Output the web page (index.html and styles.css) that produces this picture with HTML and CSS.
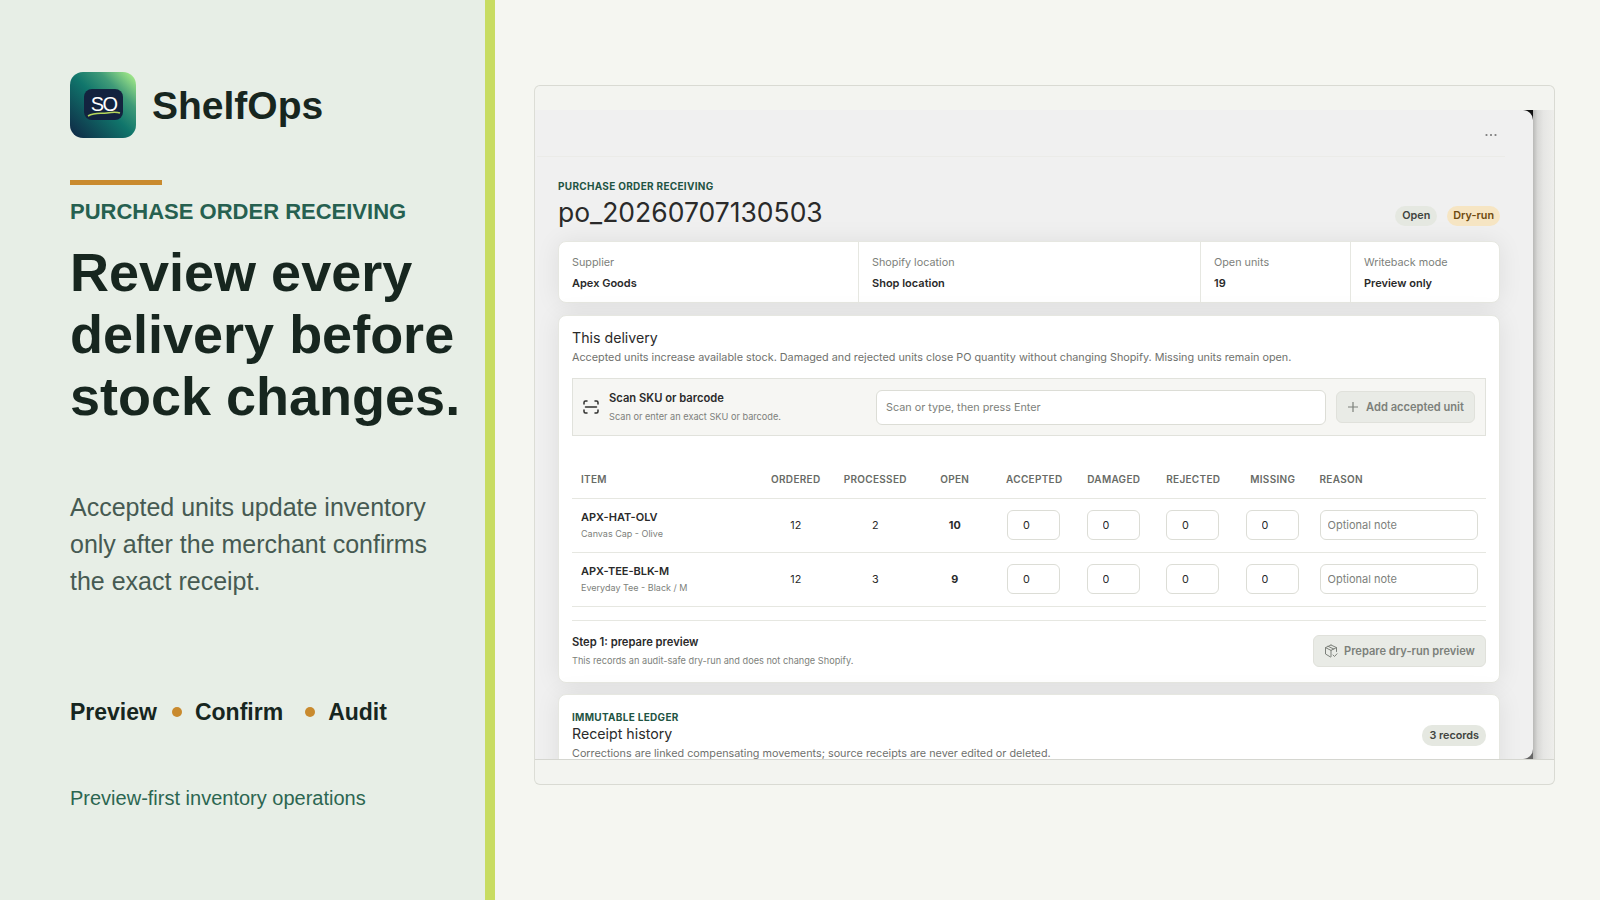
FILE: index.html
```html
<!DOCTYPE html>
<html lang="en">
<head>
    <meta charset="UTF-8">
    <meta name="viewport" content="width=device-width, initial-scale=1.0">
    <title>ShelfOps - Purchase order receiving</title>
    <link rel="stylesheet" href="styles.css">
</head>
<body>
    <aside class="intro">
        <div class="brand">
            <svg class="brand-logo" viewBox="0 0 66 66" width="66" height="66">
                <defs>
                    <linearGradient id="logo-bg" x1="0" y1="1" x2="1" y2="0">
                        <stop offset="0" stop-color="#0f2544"/>
                        <stop offset="0.5" stop-color="#10756b"/>
                        <stop offset="0.72" stop-color="#3f9a78"/>
                        <stop offset="1" stop-color="#b4f78c"/>
                    </linearGradient>
                </defs>
                <rect width="66" height="66" rx="13" fill="url(#logo-bg)"/>
                <rect x="14" y="17" width="39" height="31" rx="8" fill="#13233f"/>
                <text class="logo-text" x="33.5" y="38.5" text-anchor="middle">SO</text>
                <path d="M18 44 C25 40 31 42 37 41 C43 40 47 40 50 41" fill="none" stroke="#b5d65a" stroke-width="1.5"/>
            </svg>
            <span class="brand-name">ShelfOps</span>
        </div>
        <div class="intro-rule"></div>
        <p class="intro-eyebrow">PURCHASE ORDER RECEIVING</p>
        <h1>Review every delivery before stock changes.</h1>
        <p class="intro-text">Accepted units update inventory only after the merchant confirms the exact receipt.</p>
        <div class="steps">
            <span>Preview</span>
            <i class="dot"></i>
            <span>Confirm</span>
            <i class="dot dot-wide"></i>
            <span>Audit</span>
        </div>
        <p class="intro-foot">Preview-first inventory operations</p>
    </aside>

    <main class="stage">
        <div class="frame">
            <div class="view">
                <div class="screen">
                    <div class="topbar">
                        <svg class="more" viewBox="0 0 12 4" width="12" height="4"><circle cx="1.5" cy="2" r="1.1"/><circle cx="6" cy="2" r="1.1"/><circle cx="10.5" cy="2" r="1.1"/></svg>
                    </div>
                    <div class="content">
                        <div class="page-head">
                            <div>
                                <p class="eyebrow">PURCHASE ORDER RECEIVING</p>
                                <h2 class="po-id">po_20260707130503</h2>
                            </div>
                            <div class="badges">
                                <span class="badge">Open</span>
                                <span class="badge badge-warn">Dry-run</span>
                            </div>
                        </div>

                        <div class="card summary">
                            <div class="summary-cell"><span>Supplier</span><strong>Apex Goods</strong></div>
                            <div class="summary-cell"><span>Shopify location</span><strong>Shop location</strong></div>
                            <div class="summary-cell"><span>Open units</span><strong>19</strong></div>
                            <div class="summary-cell"><span>Writeback mode</span><strong>Preview only</strong></div>
                        </div>

                        <section class="card delivery">
                            <h3>This delivery</h3>
                            <p class="muted">Accepted units increase available stock. Damaged and rejected units close PO quantity without changing Shopify. Missing units remain open.</p>

                            <div class="scan">
                                <svg class="scan-icon" viewBox="0 0 16 14" width="16" height="14" fill="none" stroke="#30302e" stroke-width="1.5" stroke-linecap="round">
                                    <path d="M1 4 V2.5 A1.5 1.5 0 0 1 2.5 1 H4"/>
                                    <path d="M12 1 H13.5 A1.5 1.5 0 0 1 15 2.5 V4"/>
                                    <path d="M1 10 V11.5 A1.5 1.5 0 0 0 2.5 13 H4"/>
                                    <path d="M12 13 H13.5 A1.5 1.5 0 0 0 15 11.5 V10"/>
                                    <path d="M2.5 7 H13.5"/>
                                </svg>
                                <div class="scan-copy">
                                    <strong>Scan SKU or barcode</strong>
                                    <span>Scan or enter an exact SKU or barcode.</span>
                                </div>
                                <input class="scan-input" type="text" placeholder="Scan or type, then press Enter">
                                <button class="btn btn-add">
                                    <svg viewBox="0 0 12 12" width="12" height="12" fill="none" stroke="#7c807a" stroke-width="1.2"><path d="M6 1 V11 M1 6 H11"/></svg>
                                    Add accepted unit
                                </button>
                            </div>

                            <table class="lines">
                                <colgroup>
                                    <col class="col-item">
                                    <col class="col-num"><col class="col-num"><col class="col-num"><col class="col-num">
                                    <col class="col-num"><col class="col-num"><col class="col-num">
                                    <col class="col-reason">
                                </colgroup>
                                <thead>
                                    <tr>
                                        <th class="left">ITEM</th>
                                        <th>ORDERED</th>
                                        <th>PROCESSED</th>
                                        <th>OPEN</th>
                                        <th>ACCEPTED</th>
                                        <th>DAMAGED</th>
                                        <th>REJECTED</th>
                                        <th>MISSING</th>
                                        <th class="left">REASON</th>
                                    </tr>
                                </thead>
                                <tbody>
                                    <tr>
                                        <td class="left"><strong class="sku">APX-HAT-OLV</strong><span class="sku-name">Canvas Cap - Olive</span></td>
                                        <td>12</td>
                                        <td>2</td>
                                        <td><strong>10</strong></td>
                                        <td><input class="qty" type="text" value="0"></td>
                                        <td><input class="qty" type="text" value="0"></td>
                                        <td><input class="qty" type="text" value="0"></td>
                                        <td><input class="qty" type="text" value="0"></td>
                                        <td><input class="note" type="text" placeholder="Optional note"></td>
                                    </tr>
                                    <tr>
                                        <td class="left"><strong class="sku">APX-TEE-BLK-M</strong><span class="sku-name">Everyday Tee - Black / M</span></td>
                                        <td>12</td>
                                        <td>3</td>
                                        <td><strong>9</strong></td>
                                        <td><input class="qty" type="text" value="0"></td>
                                        <td><input class="qty" type="text" value="0"></td>
                                        <td><input class="qty" type="text" value="0"></td>
                                        <td><input class="qty" type="text" value="0"></td>
                                        <td><input class="note" type="text" placeholder="Optional note"></td>
                                    </tr>
                                </tbody>
                            </table>

                            <div class="step">
                                <div class="step-copy">
                                    <strong>Step 1: prepare preview</strong>
                                    <span>This records an audit-safe dry-run and does not change Shopify.</span>
                                </div>
                                <button class="btn btn-prepare">
                                    <svg viewBox="0 0 14 14" width="14" height="14" fill="none" stroke="#7c807a" stroke-width="1" stroke-linejoin="round" stroke-linecap="round">
                                        <path d="M7 1 L12.5 3.6 V7.5 M7 1 L1.5 3.6 V10 L6.5 13"/>
                                        <path d="M1.5 3.6 L7 6.4 L12.5 3.6 M7 6.4 V12.5 M4 2.3 L9.8 5"/>
                                        <path d="M9 11 L10.5 12.5 L13 9.8"/>
                                    </svg>
                                    Prepare dry-run preview
                                </button>
                            </div>
                        </section>

                        <section class="card ledger">
                            <div class="ledger-head">
                                <div>
                                    <p class="eyebrow">IMMUTABLE LEDGER</p>
                                    <h3>Receipt history</h3>
                                </div>
                                <span class="badge">3 records</span>
                            </div>
                            <p class="muted">Corrections are linked compensating movements; source receipts are never edited or deleted.</p>
                        </section>
                    </div>
                </div>
                <div class="shade"></div>
            </div>
        </div>
    </main>
</body>
</html>
```

FILE: styles.css
```css
* {
    box-sizing: border-box;
}
html, body {
    height: 100%;
}
body {
    margin: 0;
    display: flex;
    height: 900px;
    overflow: hidden;
    background-color: #f5f6f1;
    font-family: Inter, "Liberation Sans", sans-serif;
    color: #2a2a2a;
}
p, h1, h2, h3 {
    margin: 0;
}

/* left panel */
.intro {
    width: 495px;
    flex: none;
    padding: 72px 0 0 70px;
    background-color: #e7eee6;
    border-right: 10px solid #c8dc62;
    font-family: "Liberation Sans", Arial, sans-serif;
    color: #17261f;
}
.brand {
    display: flex;
    align-items: center;
    gap: 16px;
    height: 66px;
}
.brand-logo {
    flex: none;
}
.logo-text {
    font-family: "Liberation Sans", Arial, sans-serif;
    font-size: 20px;
    letter-spacing: -1.8px;
    fill: #fff;
}
.brand-name {
    padding-top: 2px;
    font-size: 39px;
    font-weight: 700;
}
.intro-rule {
    width: 92px;
    height: 5px;
    margin-top: 42px;
    background-color: #c98a2e;
}
.intro-eyebrow {
    margin-top: 13px;
    font-size: 22px;
    line-height: 28px;
    font-weight: 700;
    color: #266050;
}
h1 {
    margin-top: 15px;
    width: 400px;
    font-size: 54px;
    line-height: 62px;
    font-weight: 700;
}
.intro-text {
    margin-top: 62px;
    width: 370px;
    font-size: 25px;
    line-height: 37px;
    color: #465a52;
}
.steps {
    display: flex;
    align-items: center;
    margin-top: 98px;
    font-size: 23px;
    line-height: 28px;
    font-weight: 700;
}
.dot {
    width: 10px;
    height: 10px;
    margin: 0 13px 0 15px;
    border-radius: 50%;
    background-color: #c98a2e;
}
.dot-wide {
    margin: 0 13px 0 22px;
}
.intro-foot {
    margin-top: 59px;
    font-size: 20px;
    line-height: 26px;
    color: #2c6651;
}

/* screenshot frame */
.stage {
    flex: 1;
    padding: 85px 45px 0 39px;
}
.frame {
    height: 700px;
    padding: 24px 0 25px;
    background-color: #f3f4f0;
    border: 1px solid #d9dad3;
    border-left-color: #dcddd6;
    border-radius: 6px;
}
.view {
    position: relative;
    display: flex;
    height: 650px;
    border-bottom: 1px solid #d5d6d0;
}
/* dark corners of the captured window, behind the rounded screen */
.view::before,
.view::after {
    content: "";
    position: absolute;
    left: 988px;
    width: 10px;
    height: 10px;
}
.view::before {
    top: 0;
    background-color: #111;
}
.view::after {
    bottom: 0;
    background-color: #666;
}
.screen {
    position: relative;
    z-index: 1;
    width: 998px;
    flex: none;
    overflow: hidden;
    background-color: #f0f0f0;
    border-radius: 0 10px 10px 0;
}
.shade {
    flex: 1;
    background: linear-gradient(90deg, #b9b9b7 0%, #d8d8d6 22%, #e6e6e4 50%, #eeeeeb 100%);
}
.topbar {
    display: flex;
    justify-content: flex-end;
    align-items: center;
    height: 47px;
    margin: 0 28px 0 2px;
    padding: 3px 8px 0 0;
    border-bottom: 1px solid #ebebe8;
}
.more {
    fill: #7b7b7b;
}
.content {
    padding: 22px 33px 0 23px;
}
.eyebrow {
    font-size: 10px;
    line-height: 14px;
    font-weight: 700;
    letter-spacing: 0.3px;
    color: #1f5443;
}
.page-head {
    display: flex;
    justify-content: space-between;
    align-items: flex-end;
    margin-bottom: 13px;
}
.po-id {
    margin-top: 3px;
    font-size: 26.5px;
    line-height: 32px;
    font-weight: 400;
    color: #2a2a2a;
}
.badges {
    display: flex;
    gap: 10px;
    margin-bottom: 2px;
}
.badge {
    padding: 0 7px;
    height: 20px;
    line-height: 20px;
    border-radius: 10px;
    font-size: 10.8px;
    font-weight: 600;
    background-color: #e5e8e1;
    color: #40443f;
}
.badge-warn {
    padding: 0 6px;
    background-color: #f6e5c3;
    color: #6d4a10;
}
.card {
    background-color: #fff;
    border: 1px solid #e6e7e1;
    border-radius: 8px;
    box-shadow: 0 1px 24px rgba(0, 0, 0, 0.08);
}
.summary {
    display: grid;
    grid-template-columns: 299px 342px 150px 1fr;
    height: 62px;
}
.summary-cell {
    padding: 14px 13px 0;
    border-left: 1px solid #e6e7e1;
}
.summary-cell:first-child {
    border-left: none;
}
.summary-cell span {
    display: block;
    font-size: 10.8px;
    line-height: 14px;
    color: #7d7f7b;
}
.summary-cell strong {
    display: block;
    margin-top: 6px;
    font-size: 11px;
    line-height: 14px;
    font-weight: 600;
}
.delivery {
    height: 368px;
    margin-top: 12px;
    padding: 13px 13px 0;
}
h3 {
    font-size: 14.2px;
    line-height: 18px;
    font-weight: 400;
}
.muted {
    margin-top: 4px;
    font-size: 10.8px;
    line-height: 14px;
    color: #6f716d;
}

/* scan row */
.scan {
    display: flex;
    align-items: center;
    height: 58px;
    margin-top: 13px;
    padding: 0 10px;
    background-color: #f6f6f3;
    border: 1px solid #e1e2dc;
}
.scan-icon {
    flex: none;
}
.scan-copy {
    width: 267px;
    margin-left: 10px;
}
.scan-copy strong,
.step-copy strong {
    display: block;
    font-size: 11.2px;
    line-height: 14px;
    font-weight: 600;
}
.scan-copy span,
.step-copy span {
    display: block;
    margin-top: 5px;
    font-size: 9.2px;
    line-height: 13px;
    color: #7d7f7b;
}
input {
    font-family: Inter, "Liberation Sans", sans-serif;
    color: #2a2a2a;
    background-color: #fff;
    border: 1px solid #dcddd6;
    outline: none;
}
input::placeholder {
    color: #7d7f7b;
    opacity: 1;
}
.scan-input {
    width: 450px;
    height: 35px;
    padding: 0 9px;
    font-size: 10.8px;
    border-radius: 6px;
}
.btn {
    display: flex;
    align-items: center;
    justify-content: center;
    flex: none;
    gap: 7px;
    padding: 0;
    font-family: Inter, "Liberation Sans", sans-serif;
    font-size: 11.1px;
    font-weight: 600;
    color: #7c807a;
    background-color: #e9ebe6;
    border: 1px solid #e0e1db;
    border-radius: 6px;
}
.btn-add {
    width: 139px;
    height: 32px;
    margin-left: 10px;
}
.btn-prepare {
    width: 173px;
    height: 32px;
    gap: 6px;
}

/* receiving table */
.lines {
    width: 100%;
    margin-top: 19px;
    border-collapse: collapse;
    table-layout: fixed;
}
.col-item {
    width: 184px;
}
.col-num {
    width: 79.5px;
}
.lines th {
    height: 43px;
    padding: 6px 0 0;
    font-size: 10px;
    font-weight: 600;
    letter-spacing: 0.3px;
    color: #686b66;
    text-align: center;
    border-bottom: 1px solid #e6e7e1;
}
.lines td {
    height: 54px;
    padding: 0;
    font-size: 10.8px;
    text-align: center;
    border-bottom: 1px solid #e6e7e1;
}
.lines td strong {
    font-weight: 700;
}
.lines th.left,
.lines td.left {
    padding-left: 9px;
    text-align: left;
}
.lines th:last-child {
    padding-left: 7px;
}
.lines td .sku {
    display: block;
    font-size: 11px;
    line-height: 14px;
    font-weight: 600;
}
.sku-name {
    display: block;
    margin-top: 3px;
    font-size: 9px;
    line-height: 13px;
    color: #7d7f7b;
}
.qty {
    display: block;
    width: 53px;
    height: 30px;
    margin-left: 12.5px;
    padding: 0 0 0 15px;
    font-size: 10.8px;
    border-radius: 6px;
}
.note {
    display: block;
    width: 158px;
    height: 30px;
    margin-left: 7px;
    padding: 0 7px;
    font-size: 11px;
    border-radius: 6px;
}
.step {
    display: flex;
    justify-content: space-between;
    align-items: flex-start;
    margin-top: 13px;
    padding-top: 14px;
    border-top: 1px solid #e6e7e1;
}
.ledger {
    height: 90px;
    margin-top: 11px;
    padding: 15px 13px 0;
}
.ledger-head {
    display: flex;
    justify-content: space-between;
    align-items: flex-end;
}
.ledger .badge {
    height: 21px;
    line-height: 21px;
    margin-bottom: -3px;
}
.ledger h3 {
    margin-top: 1px;
}
```
